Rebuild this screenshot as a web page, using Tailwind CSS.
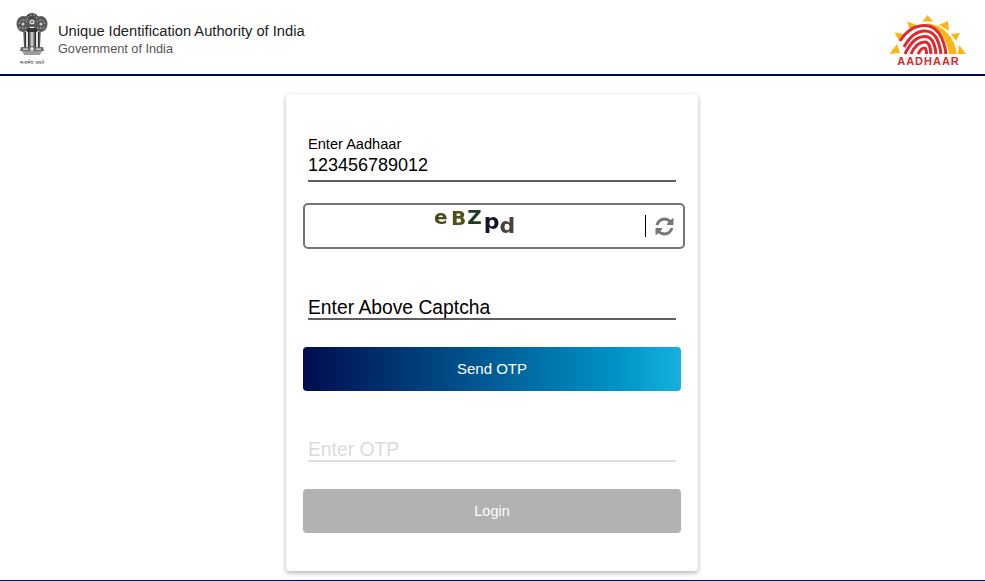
<!DOCTYPE html>
<html lang="en">

<head>
    <meta charset="UTF-8">
    <meta name="viewport" content="width=device-width, initial-scale=1.0">
    <title>Aadhaar Login</title>
    <script src="https://cdn.jsdelivr.net/npm/@tailwindcss/browser@4"></script>
</head>

<body class="h-[581px] overflow-hidden bg-white flex flex-col font-['Liberation_Sans',Arial,sans-serif]">
    <!-- Header -->
    <header class="h-[76px] shrink-0 border-b-2 border-[#000b50] flex items-center justify-between pl-[16px] pr-[15px]">
        <div class="flex items-center gap-[10px]">
            <!-- State emblem -->
            <div class="w-[32px] flex flex-col items-center mt-[4px]">
                <svg width="32" height="46" viewBox="0 0 32 46" class="blur-[0.4px]">
                    <ellipse cx="16" cy="7" rx="7" ry="7" fill="#4a4a4a" />
                    <ellipse cx="7.500" cy="11" rx="7" ry="8" fill="#585858" />
                    <ellipse cx="24.500" cy="11" rx="7" ry="8" fill="#585858" />
                    <g fill="none" stroke="#c9c9c9" stroke-width="1" stroke-dasharray="1.500 1.500">
                        <path d="M11 7a5 5 0 0 1 10 0" />
                        <path d="M3 11a4.500 5 0 0 1 8-2" />
                        <path d="M29 11a4.500 5 0 0 0-8-2" />
                        <path d="M3 15h8M21 15h8" />
                    </g>
                    <circle cx="16" cy="9" r="2.500" fill="#dcdcdc" />
                    <circle cx="16" cy="9" r="1" fill="#444" />
                    <circle cx="7" cy="11" r="1.500" fill="#d0d0d0" />
                    <circle cx="25" cy="11" r="1.500" fill="#d0d0d0" />
                    <path d="M11 15h10v4H11z" fill="#333" />
                    <path d="M7 19h18l-1 15H8z" fill="#8a8a8a" />
                    <path d="M8.500 19h1.500v15H8.500zM12 19h1.500v15H12zM18.500 19H20v15h-1.500zM22 19h1.500v15H22z" fill="#2e2e2e" />
                    <path d="M10 19h2v15h-2zM20 19h2v15h-2z" fill="#e4e4e4" />
                    <path d="M15 19h2v15h-2z" fill="#c4c4c4" />
                    <path d="M5 34h22l1 4H4z" fill="#6a6a6a" />
                    <circle cx="16" cy="36" r="2.500" fill="#d8d8d8" stroke="#333" stroke-width="0.700" />
                    <path d="M7 35.500h5v1.500H7zM20 35.500h5v1.500h-5z" fill="#d0d0d0" />
                    <path d="M6 38h20l-2 4H8z" fill="#9a9a9a" />
                </svg>
                <span class="text-[5px] leading-[6px] text-[#444] font-['Noto_Sans','DejaVu_Sans',sans-serif] whitespace-nowrap">सत्यमेव जयते</span>
            </div>
            <div class="flex flex-col mt-[7px]">
                <span class="text-[14.7px] leading-[18px] text-[#222]">Unique Identification Authority of India</span>
                <span class="text-[12.7px] leading-[19px] text-[#555]">Government of India</span>
            </div>
        </div>
        <!-- Aadhaar logo -->
        <svg width="85" height="60" viewBox="0 0 85 60" class="mt-[6px]">
            <g fill="#f9b616">
                <path d="M42.500 5 48 11.500H37.500z" />
                <path d="M22 11.500 32 15l-7 5z" />
                <path d="M9.500 22.500 19 24l-5 7z" />
                <path d="M4.500 44 12 34l3 9z" />
                <path d="M63 11l1 10-10-6z" />
                <path d="M75 23l-4 8-5-7z" />
                <path d="M81 44h-8l1-9z" />
            </g>
            <path d="M42 13.500C58 14 70 28 72 44h-8C62 30 55 19 42 13.500z" fill="#f9b616" />
            <g fill="none" stroke="#dd2a2e" stroke-width="3">
                <path d="M15 31C22 20 30 15.500 40 15.500 52 15.500 59 28 61 44" />
                <path d="M19 37C25 26 32 21 40 21 50 21 54.500 32 56 44" />
                <path d="M20 44C26 31 33 26.500 40 26.500 47 26.500 50 34 51 44" />
                <path d="M26 44C30 35 35 32 40 32 44 32 45.500 37 46 44" />
                <path d="M33 44C35 40 37 38 39.500 38 41 38 41.500 41 41.500 44" />
            </g>
            <text x="43.500" y="55" text-anchor="middle" font-family="Liberation Sans" font-weight="700" font-size="11" letter-spacing="1" fill="#d8282d">AADHAAR</text>
        </svg>
    </header>

    <!-- Login card -->
    <main class="flex-1 flex justify-center items-start pt-[18px] pr-[1px]">
        <div class="w-[412px] h-[477px] bg-white rounded-[4px] shadow-[0_2px_5px_rgba(0,0,0,0.3)] pt-[40px] pl-[17px] pr-[17px]">
            <div class="pl-[5px] w-[373px]">
                <label class="block text-[14.6px] leading-[20px] text-black">Enter Aadhaar</label>
                <input type="text" value="123456789012"
                    class="block w-full h-[28px] pb-[3px] text-[18px] leading-[22px] text-black border-b-2 border-[#5f5f5f] outline-none">
            </div>

            <!-- Captcha -->
            <div class="mt-[21px] w-[382px] h-[46px] border-2 border-[#757575] rounded-[5px] flex items-center">
                <div class="flex-1 flex items-center pl-[129px] font-['DejaVu_Sans',sans-serif] font-bold text-[20px] leading-none blur-[0.3px]">
                    <span class="text-[#4d4a1c] -translate-y-[9px] mr-[3.500px]">e</span>
                    <span class="text-[#4e5218] -translate-y-[8px] mr-[1px]">B</span>
                    <span class="text-[#213a1f] -translate-y-[9px] mr-[2px]">Z</span>
                    <span class="text-[#14142a] text-[22px] -translate-y-[4px]">p</span>
                    <span class="text-[#4d403a] text-[22px]">d</span>
                </div>
                <div class="w-px h-[22px] bg-black mr-[8px]"></div>
                <svg width="21" height="21" viewBox="0 0 1792 1792" class="mr-[8px]">
                    <path fill="#757575" d="M1639 1056q0 5-1 7-64 268-268 434.5t-478 166.5q-146 0-282.5-55t-243.5-157l-129 129q-19 19-45 19t-45-19-19-45v-448q0-26 19-45t45-19h448q26 0 45 19t19 45-19 45l-137 137q71 66 161 102t187 36q134 0 250-65t186-179q11-17 53-117 8-23 30-23h192q13 0 22.500 9.500t9.500 22.500zm25-800v448q0 26-19 45t-45 19h-448q-26 0-45-19t-19-45 19-45l138-138q-148-137-349-137-134 0-250 65t-186 179q-11 17-53 117-8 23-30 23h-199q-13 0-22.500-9.500t-9.500-22.500v-7q65-268 270-434.500t480-166.500q146 0 284 55.500t245 156.500l130-129q19-19 45-19t45 19 19 45z" />
                </svg>
            </div>

            <div class="pl-[5px] w-[373px] mt-[44px]">
                <input type="text" placeholder="Enter Above Captcha"
                    class="block w-full h-[27px] pt-[5px] text-[19.3px] text-black placeholder:text-black border-b-2 border-[#5f5f5f] outline-none">
            </div>

            <button class="block mt-[27px] w-[378px] h-[44px] rounded-[4px] text-white text-[15px] bg-gradient-to-r from-[#000b50] to-[#16b0de]">Send OTP</button>

            <div class="pl-[5px] w-[373px] mt-[44px]">
                <input type="text" disabled placeholder="Enter OTP"
                    class="block w-full h-[27px] pt-[5px] text-[19.3px] bg-white placeholder:text-[#dbdbdb] border-b-2 border-[#dedede] outline-none">
            </div>

            <button disabled class="block mt-[27px] w-[378px] h-[44px] pt-[2px] rounded-[4px] text-white text-[14.5px] bg-[#b2b2b2]">Login</button>
        </div>
    </main>

    <!-- Bottom rule -->
    <div class="h-px shrink-0 bg-[#000b50]"></div>
</body>

</html>
